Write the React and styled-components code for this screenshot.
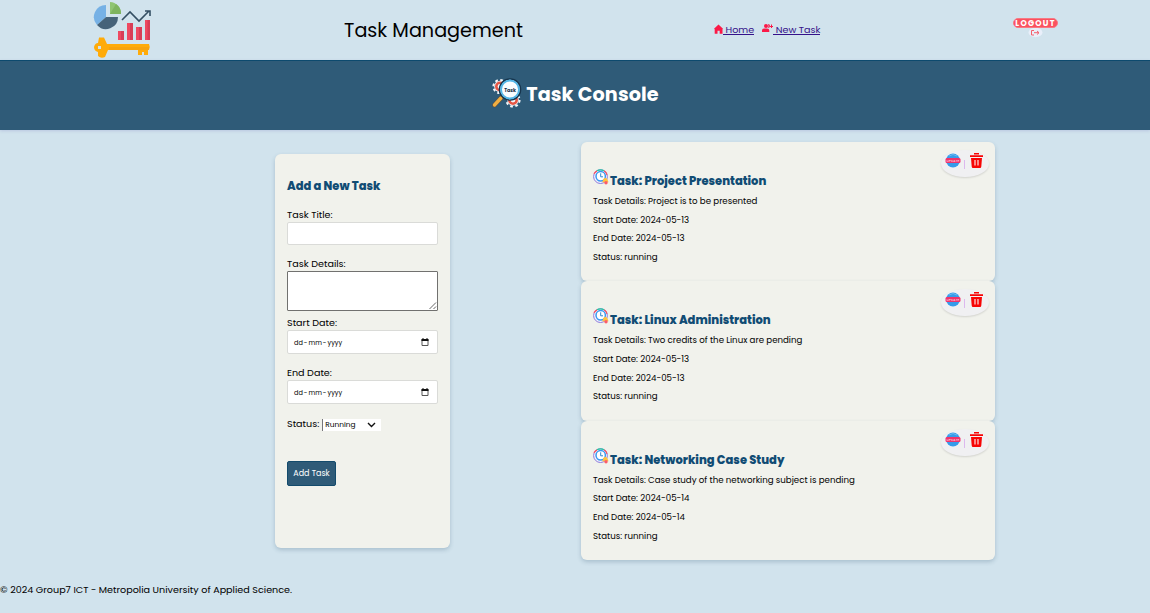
import React from 'react';
import styled, { createGlobalStyle } from 'styled-components';

const GlobalStyle = createGlobalStyle`
  * { box-sizing: border-box; }
  body {
    margin: 0;
    background: #d1e3ed;
    color: #000;
    font-family: Poppins, Inter, "Open Sans", sans-serif;
  }
  h1, h2, h3, p { margin: 0; }
`;

const Page = styled.div`
  width: 1150px;
  height: 613px;
  overflow: hidden;
  display: flex;
  flex-direction: column;
`;

const Header = styled.header`
  height: 60px;
  flex: none;
  display: flex;
  align-items: flex-start;
  padding-left: 92px;
`;

const Brand = styled.div`
  width: 252px;
  height: 60px;
`;

const SiteTitle = styled.div`
  width: 370px;
  padding-top: 16px;
  font-size: 19.2px;
  line-height: 30px;
  white-space: nowrap;
`;

const Nav = styled.nav`
  width: 298px;
  display: flex;
  gap: 8px;
  padding-top: 23px;
`;

const NavLink = styled.a`
  display: flex;
  align-items: flex-start;
  color: #35128a;
  font-size: 9.6px;
  line-height: 14px;
  white-space: nowrap;
  svg { flex: none; }
  span {
    white-space: pre;
    border-bottom: 1px solid #35128a;
    height: 12px;
  }
`;

const Logout = styled.div`
  width: 46px;
  padding-top: 18px;
  display: flex;
  flex-direction: column;
  align-items: center;
`;

const LogoutPill = styled.div`
  width: 45px;
  height: 10px;
  border-radius: 6px;
  background: #fb515f;
  border: 1px solid #f77883;
  color: #fff;
  font-size: 8px;
  line-height: 9px;
  font-weight: 700;
  letter-spacing: 1.25px;
  text-align: center;
  text-indent: 1px;
`;

const Banner = styled.section`
  height: 70px;
  flex: none;
  background: #2f5b78;
  border-top: 1px solid #0d4a6e;
  display: flex;
  justify-content: center;
  align-items: flex-start;
  gap: 4px;
  padding-top: 16px;
  box-shadow: 0 1px 3px rgba(120, 120, 190, 0.25);
`;

const BannerTitle = styled.h1`
  color: #fff;
  font-size: 19.2px;
  line-height: 36px;
  font-weight: 700;
  letter-spacing: 0.12px;
`;

const Main = styled.main`
  height: 448px;
  flex: none;
  display: flex;
  align-items: flex-start;
  padding: 12px 0 0 275px;
  gap: 131px;
`;

const FormCard = styled.form`
  width: 175px;
  height: 394px;
  margin-top: 12px;
  padding: 24px 12px 0;
  background: #f1f2ec;
  border-radius: 6px;
  box-shadow: 0 2px 4px rgba(40, 80, 110, 0.24);
`;

const FormTitle = styled.h2`
  color: #104c74;
  font-size: 11.5px;
  line-height: 17px;
  font-weight: 800;
  margin-bottom: 13px;
  white-space: nowrap;
`;

const Field = styled.div`
  margin-bottom: ${(p) => p.$after}px;
`;

const Label = styled.label`
  display: block;
  font-size: 9.6px;
  line-height: 14px;
  height: 14px;
  white-space: nowrap;
`;

const Input = styled.div`
  width: 151px;
  height: ${(p) => p.$height || 24}px;
  background: #fff;
  border: 1px solid #dadbd8;
  border-radius: 2px;
  display: flex;
  align-items: center;
  justify-content: space-between;
  padding: 1px 8px 0 6px;
  font-size: 6.5px;
  word-spacing: -0.7px;
`;

const TextArea = styled.div`
  width: 151px;
  height: 40px;
  background: #fff;
  border: 1px solid #71716f;
  border-radius: 1px;
  display: flex;
  align-items: flex-end;
  justify-content: flex-end;
`;

const StatusRow = styled.div`
  display: flex;
  align-items: center;
  height: 14px;
  gap: 3px;
  margin-bottom: 30px;
`;

const Select = styled.div`
  width: 59px;
  height: 12px;
  margin-top: 1px;
  background: #fff;
  border-left: 1px solid #77777a;
  display: flex;
  align-items: center;
  justify-content: space-between;
  padding: 0 5px 0 2px;
  font-size: 7.4px;
`;

const AddButton = styled.button`
  width: 49px;
  height: 25px;
  padding: 0;
  display: block;
  background: #2f5b78;
  border: 1px solid #134b6c;
  border-radius: 2px;
  color: #fff;
  font-family: inherit;
  font-size: 8px;
  line-height: 22px;
  white-space: nowrap;
`;

const TaskList = styled.div`
  width: 414px;
`;

const TaskCard = styled.article`
  height: 139.4px;
  padding: 9px 6px 0 12px;
  display: flex;
  justify-content: space-between;
  align-items: flex-start;
  background: #f1f2ec;
  border-radius: 6px;
  box-shadow: 0 2px 4px rgba(40, 80, 110, 0.24);
`;

const TaskBody = styled.div`
  padding-top: 17px;
`;

const TaskTitle = styled.h3`
  display: flex;
  align-items: flex-start;
  gap: 1px;
  height: 24px;
  color: #104c74;
  font-size: 11.52px;
  line-height: 26px;
  font-weight: 800;
  white-space: nowrap;
`;

const TaskLine = styled.p`
  font-size: 8.64px;
  line-height: 18.6px;
  white-space: nowrap;
`;

const Actions = styled.div`
  width: 48px;
  height: 27px;
  margin-top: -1px;
  border-radius: 50%;
  background: #f0f0f2;
  box-shadow: 0 1px 2px rgba(0, 0, 0, 0.13);
  display: flex;
  padding: 3px 0 0 4px;
`;

const Divider = styled.span`
  width: 1px;
  height: 9px;
  margin: 7px 5px 0 3px;
  background: #dcb9ee;
`;

const Footer = styled.footer`
  padding-top: 4px;
  font-size: 9.6px;
  line-height: 16px;
  white-space: nowrap;
`;

const BrandLogo = () => (
  <svg width="60" height="60" viewBox="0 0 60 60">
    <path d="M14 17V5A12 12 0 0 0 5 25Z" fill="#76b1e5" />
    <path d="M14 17H26A12 12 0 0 1 5 25Z" fill="#46637a" />
    <path d="M18 2V14H29A11.5 11.5 0 0 0 18 2Z" fill="#8fc472" />
    <path d="M18 14L24 4A11.5 11.5 0 0 1 29 14Z" fill="#7eb45f" />
    <path d="M30 20L38 12L47 21L57 11M53 11H58V16" fill="none" stroke="#344f63" strokeWidth="1.6" />
    <path d="M26 31H32V40H26ZM35 23H41V40H35ZM44 27H50V40H44ZM53 20H58V40H53Z" fill="#ee4961" />
    <path d="M29 31H32V40H29ZM38 23H41V40H38ZM47 27H50V40H47ZM55.5 20H58V40H55.5Z" fill="#d83d56" />
    <path fillRule="evenodd" d="M7 37.500H12L15 44H57Q58.500 47 57 50H56V55H52V52H50V55H46V50H16L13 57Q9 59 6 56V52Q2 51 2 47Q3 43 6 43ZM6 46V49H9V46Z" fill="#ffab09" />
    <path d="M17 47H57V50H17Z" fill="#f7a30d" />
  </svg>
);

const HomeIcon = () => (
  <svg width="9" height="12" viewBox="0 0 9 12">
    <path d="M0 5.700L4.500 1.500L9 5.700L8.500 6.300V10.800H5.700V7.800H3.500V10.800H0.700V6.300Z" fill="#fb1947" />
  </svg>
);

const NewTaskIcon = () => (
  <svg width="11" height="12" viewBox="0 0 11 12">
    <circle cx="4" cy="3" r="2" fill="#fb1947" />
    <path d="M0 9V7.500Q0 5.500 2 5.500H5Q7.300 5.500 7.300 7.500V9ZM6 1Q8 1 8 3Q8 5 6 5Q7 3 6 1ZM9 1.500H10V3H11V4H10V5H9V4H8V3H9Z" fill="#fb1947" />
  </svg>
);

const ExitIcon = () => (
  <svg width="15" height="10" viewBox="0 0 15 10">
    <ellipse cx="7.500" cy="4.500" rx="7" ry="4.700" fill="#e9effa" />
    <path d="M6 2.500H3.500V7H6M6 4.700H11M9 3L11 4.700L9 6.500" fill="none" stroke="#f4606d" strokeWidth="1" />
  </svg>
);

const Gear = ({ cx, cy }) => (
  <g>
    <circle cx={cx} cy={cy} r="6.600" fill="none" stroke="#f4f8fb" strokeWidth="2" strokeDasharray="2.700 2.500" />
    <circle cx={cx} cy={cy} r="5.800" fill="#f4f8fb" />
    <circle cx={cx} cy={cy} r="3.700" fill="none" stroke="#e65745" strokeWidth="2.600" />
  </g>
);

const ConsoleIcon = () => (
  <svg width="31" height="32" viewBox="0 0 31 32">
    <Gear cx={9} cy={9.5} />
    <Gear cx={22} cy={23} />
    <path d="M3.500 28L10 21" stroke="#624d3a" strokeWidth="4.600" strokeLinecap="round" />
    <path d="M3.500 28L10 21" stroke="#efae42" strokeWidth="3.400" strokeLinecap="round" />
    <circle cx="19" cy="12.500" r="10.500" fill="#fff" stroke="#17354d" strokeWidth="1.600" />
    <circle cx="19" cy="12.500" r="9" fill="#f9fcff" stroke="#53b6e8" strokeWidth="1.900" />
    <text x="19" y="14.500" textAnchor="middle" fontSize="4.800" fontWeight="700" fill="#152c43">Task</text>
  </svg>
);

const ClockIcon = () => (
  <svg width="16" height="18" viewBox="0 0 16 18">
    <g transform="translate(0 0.800)">
      <circle cx="7.500" cy="7.800" r="6.900" fill="#f7f4fb" stroke="#8d7adb" strokeWidth="1" />
      <path d="M1 5A7 7 0 0 1 4 2M11 2A7 7 0 0 1 14 6" fill="none" stroke="#f65062" strokeWidth="1.300" />
      <path d="M4 2A7 7 0 0 1 11 2" fill="none" stroke="#24caa1" strokeWidth="1.300" />
      <circle cx="7.700" cy="7.500" r="4.700" fill="#fff" stroke="#3698f3" strokeWidth="1.500" />
      <path d="M7.700 4.500V8H10" fill="none" stroke="#3188cd" strokeWidth="1" />
      <path d="M9 13.500Q10.200 12 10.200 10.500Q12.300 7.500 14.400 10.500L15.500 13.500Z" fill="#ffc33f" />
      <circle cx="13" cy="14" r="1.700" fill="#fb5c6a" />
    </g>
  </svg>
);

const UpdateIcon = () => (
  <svg width="16" height="16" viewBox="0 0 16 16">
    <circle cx="8" cy="7.500" r="6.900" fill="#369bea" />
    <path d="M4 3Q8 0 12 3" fill="none" stroke="#69b9f0" />
    <rect x="0.500" y="5" width="15" height="5" rx="1.500" fill="#f0336a" />
    <text x="8" y="8.800" textAnchor="middle" fontSize="3.400" fontWeight="500" fill="#ffc5da">UPDATE</text>
  </svg>
);

const TrashIcon = () => (
  <svg width="13" height="16" viewBox="0 0 13 16">
    <path d="M4 0H9V1.500H4ZM0 2.200H13V4H0ZM1 5H12L11.300 13.500Q11.200 15 10 15H3Q1.800 15 1.700 13.500Z" fill="#f70505" />
    <path d="M5 7V12.500M8 7V12.500" stroke="#ffe0e0" strokeWidth="1.200" />
  </svg>
);

const CalendarIcon = () => (
  <svg width="8" height="9" viewBox="0 0 8 9">
    <path d="M1 1.500H7V7.500H1Z" fill="none" stroke="#555" />
    <path d="M0.500 1H7.500V3H0.500ZM1.500 0H2.500V2H1.500ZM5.500 0H6.500V2H5.500Z" fill="#111" />
  </svg>
);

const ChevronIcon = () => (
  <svg width="9" height="6" viewBox="0 0 9 6">
    <path d="M1 1L4.500 4.500L8 1" fill="none" stroke="#111" strokeWidth="1.400" />
  </svg>
);

const ResizeGrip = () => (
  <svg width="8" height="8" viewBox="0 0 8 8">
    <path d="M0.500 7L7 0.500M4.500 7L7 4.500" stroke="#555" strokeWidth="0.900" />
  </svg>
);

const tasks = [
  { title: 'Project Presentation', details: 'Project is to be presented', date: '2024-05-13' },
  { title: 'Linux Administration', details: 'Two credits of the Linux are pending', date: '2024-05-13' },
  { title: 'Networking Case Study', details: 'Case study of the networking subject is pending', date: '2024-05-14' },
];

const DateField = ({ label, after }) => (
  <Field $after={after}>
    <Label>{label}</Label>
    <Input><span>dd - mm - yyyy</span><CalendarIcon /></Input>
  </Field>
);

const Task = ({ task }) => (
  <TaskCard>
    <TaskBody>
      <TaskTitle><ClockIcon /><span>Task: {task.title}</span></TaskTitle>
      <TaskLine>Task Details: {task.details}</TaskLine>
      <TaskLine>Start Date: {task.date}</TaskLine>
      <TaskLine>End Date: {task.date}</TaskLine>
      <TaskLine>Status: running</TaskLine>
    </TaskBody>
    <Actions><UpdateIcon /><Divider /><TrashIcon /></Actions>
  </TaskCard>
);

export default function App() {
  return (
    <Page>
      <GlobalStyle />
      <Header>
        <Brand><BrandLogo /></Brand>
        <SiteTitle>Task Management</SiteTitle>
        <Nav>
          <NavLink><HomeIcon /><span> Home</span></NavLink>
          <NavLink><NewTaskIcon /><span> New Task</span></NavLink>
        </Nav>
        <Logout><LogoutPill>LOGOUT</LogoutPill><ExitIcon /></Logout>
      </Header>
      <Banner><ConsoleIcon /><BannerTitle>Task Console</BannerTitle></Banner>
      <Main>
        <FormCard>
          <FormTitle>Add a New Task</FormTitle>
          <Field $after={12}><Label>Task Title:</Label><Input $height={23} /></Field>
          <Field $after={5}><Label>Task Details:</Label><TextArea><ResizeGrip /></TextArea></Field>
          <DateField label="Start Date:" after={12} />
          <DateField label="End Date:" after={13} />
          <StatusRow><Label>Status:</Label><Select><span>Running</span><ChevronIcon /></Select></StatusRow>
          <AddButton type="button">Add Task</AddButton>
        </FormCard>
        <TaskList>{tasks.map((task) => <Task key={task.title} task={task} />)}</TaskList>
      </Main>
      <Footer>© 2024 Group7 ICT - Metropolia University of Applied Science.</Footer>
    </Page>
  );
}
